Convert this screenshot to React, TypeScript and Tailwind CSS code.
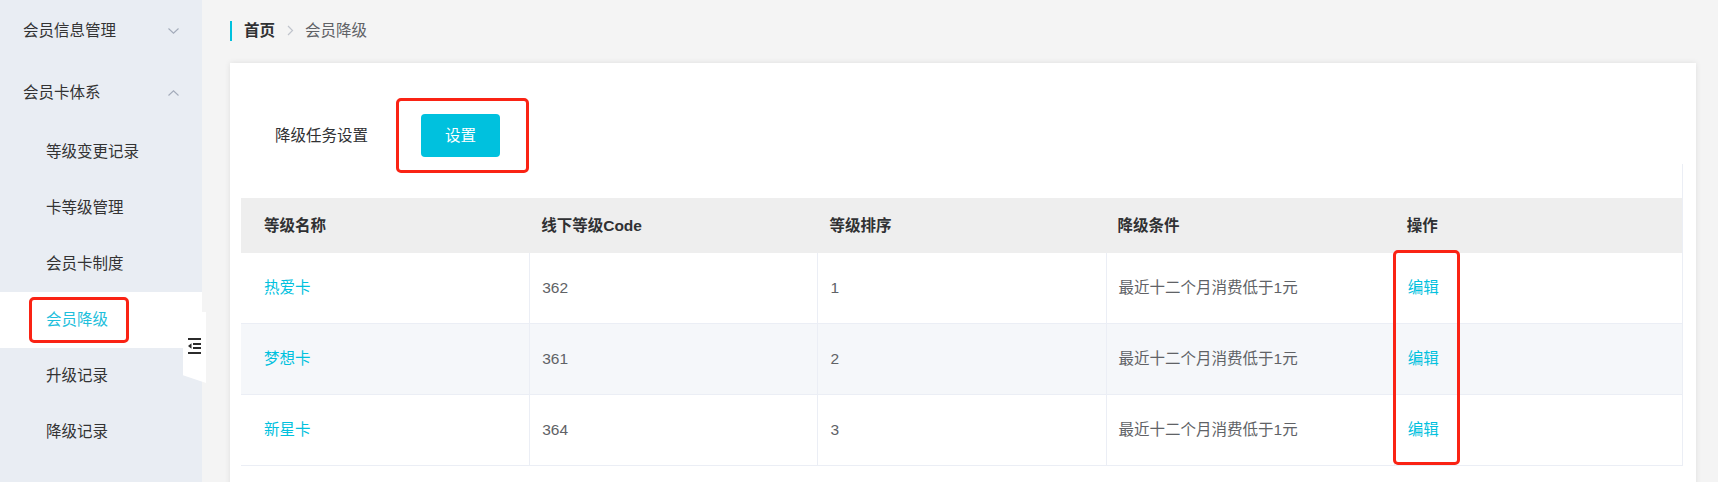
import React from "react";

type Level = { name: string; code: string; rank: string; cond: string };

const LEVELS: Level[] = [
  { name: "热爱卡", code: "362", rank: "1", cond: "最近十二个月消费低于1元" },
  { name: "梦想卡", code: "361", rank: "2", cond: "最近十二个月消费低于1元" },
  { name: "新星卡", code: "364", rank: "3", cond: "最近十二个月消费低于1元" },
];

const SUB_MENU = ["等级变更记录", "卡等级管理", "会员卡制度", "会员降级", "升级记录", "降级记录"];

function Chevron({ up }: { up?: boolean }) {
  return (
    <svg width="11" height="6" viewBox="0 0 11 6" className="shrink-0">
      <polyline
        points={up ? "0.5,5.5 5.5,0.8 10.5,5.5" : "0.5,0.5 5.5,5.2 10.5,0.5"}
        fill="none"
        stroke="#a3abba"
        strokeWidth="1.1"
      />
    </svg>
  );
}

function FoldIcon() {
  return (
    <svg width="13" height="16" viewBox="0 0 13 16">
      <rect x="0" y="0" width="13" height="2" fill="#2b2b2b" />
      <rect x="5" y="5" width="8" height="2" fill="#2b2b2b" />
      <rect x="5" y="9" width="8" height="2" fill="#2b2b2b" />
      <polygon points="0,8 3.5,5.3 3.5,10.7" fill="#2b2b2b" />
      <rect x="0" y="14" width="13" height="2" fill="#2b2b2b" />
    </svg>
  );
}

export default function App() {
  return (
    <div
      className="relative flex h-[482px] w-full overflow-hidden bg-[#f4f4f4] text-[15.5px] leading-none text-[#333]"
      style={{ fontFamily: '"Liberation Sans", "Noto Sans CJK SC", sans-serif' }}
    >
      {/* sidebar */}
      <aside className="w-[202px] shrink-0 bg-[#e9edf3]">
        <div className="flex h-[62px] items-center justify-between pl-[23px] pr-[23px]">
          <span>会员信息管理</span>
          <Chevron />
        </div>
        <div className="flex h-[62px] items-center justify-between pl-[23px] pr-[23px]">
          <span>会员卡体系</span>
          <Chevron up />
        </div>
        {SUB_MENU.map((m) => (
          <div
            key={m}
            className={`flex h-[56px] items-center pl-[46px] ${
              m === "会员降级" ? "bg-white text-[#1fc0dc]" : "text-[#333]"
            }`}
          >
            {m}
          </div>
        ))}
      </aside>

      {/* collapse tab */}
      <div className="absolute left-[183px] top-[312px] h-[71px] w-[23px] bg-white [clip-path:polygon(0_0,100%_0,100%_100%,0_89%)]">
        <div className="absolute left-[5px] top-[26px]">
          <FoldIcon />
        </div>
      </div>

      {/* main */}
      <main className="flex min-w-0 flex-1 flex-col pl-[28px] pr-[22px]">
        <div className="flex h-[63px] shrink-0 items-center">
          <div className="mb-[2px] flex items-center">
            <span className="h-[20px] w-[2px] bg-[#00c1de]" />
            <span className="ml-[12px] font-bold text-[#303133]">首页</span>
            <svg width="7" height="11" viewBox="0 0 7 11" className="ml-[12px]">
              <polyline points="1,1 5.5,5.5 1,10" fill="none" stroke="#c0c4cc" strokeWidth="1.2" />
            </svg>
            <span className="ml-[11px] text-[#606266]">会员降级</span>
          </div>
        </div>

        <section className="h-[440px] shrink-0 bg-white pl-[11px] pr-[13px] shadow-[0_0_6px_rgba(0,0,0,0.09)]">
          <div className="flex items-center pl-[34px] pt-[51px]">
            <span className="w-[146px] text-[#303133]">降级任务设置</span>
            <button className="flex h-[43px] w-[79px] items-center justify-center rounded-[4px] bg-[#00c1de] text-white">
              设置
            </button>
          </div>

          <div className="mt-[7px] border-r border-[#ebeef5] pt-[34px]">
            <div className="grid h-[55px] grid-cols-5 items-center bg-[#eeeeee] font-bold text-[#303133]">
              <div className="pl-[23px]">等级名称</div>
              <div className="pl-[12px]">线下等级Code</div>
              <div className="pl-[12px]">等级排序</div>
              <div className="pl-[12px]">降级条件</div>
              <div className="pl-[13px]">操作</div>
            </div>
            {LEVELS.map((l, i) => (
              <div
                key={l.code}
                className={`grid h-[71px] grid-cols-5 border-b border-[#ebeef5] text-[#606266] ${
                  i === 1 ? "bg-[#f5f7fa]" : "bg-white"
                }`}
              >
                <div className="flex items-center pl-[23px] text-[#00c1de]">{l.name}</div>
                <div className="flex items-center border-l border-[#ebeef5] pl-[12px]">{l.code}</div>
                <div className="flex items-center border-l border-[#ebeef5] pl-[12px]">{l.rank}</div>
                <div className="flex items-center border-l border-[#ebeef5] pl-[12px]">{l.cond}</div>
                <div className="flex items-center border-l border-[#ebeef5] pl-[13px] text-[#00c1de]">
                  编辑
                </div>
              </div>
            ))}
          </div>
        </section>
      </main>

      {/* annotation boxes */}
      <div className="pointer-events-none absolute left-[29px] top-[297px] h-[46px] w-[100px] rounded-[5px] border-[3px] border-[#fa2314]" />
      <div className="pointer-events-none absolute left-[396px] top-[98px] h-[75px] w-[133px] rounded-[5px] border-[3px] border-[#fa2314]" />
      <div className="pointer-events-none absolute left-[1393px] top-[250px] h-[215px] w-[67px] rounded-[5px] border-[3px] border-[#fa2314]" />
    </div>
  );
}
